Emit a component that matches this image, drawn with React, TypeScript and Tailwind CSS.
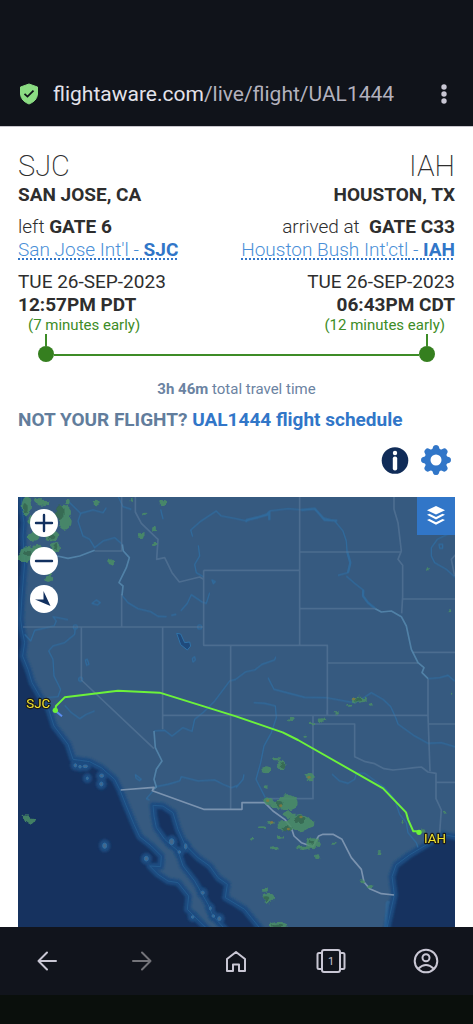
import type { ReactNode } from "react";

const TEETH = [0, 45, 90, 135, 180, 225, 270, 315];

const PACIFIC =
  "M-40 -40L8 -20L12 40L18 80L15 120L20 200L12 300L8 370L12 400L20 440L14 480L30 520L42 560L65 600L92 640L108 690L150 745L165 790L215 797L250 815L290 850L305 880L325 930L348 985L365 1022L400 1050L430 1080L428 1112L395 1110L420 1135L450 1155L480 1160L512 1200L508 1240L530 1262L590 1320L-40 1320Z";
const CORTEZ =
  "M405 928L435 930L465 950L480 1000L500 1045L540 1085L575 1110L600 1145L628 1165L622 1205L654 1224L680 1240L700 1265L745 1320L640 1320L585 1260L570 1225L550 1190L530 1155L495 1110L480 1065L440 1030L415 995L408 960Z";
const GULF =
  "M1350 1030L1311 1022L1274 1016L1224 1047L1174 1077L1134 1107L1122 1142L1129 1197L1119 1242L1102 1320L1350 1320Z";

const ISLANDS: [number, number, number, number][] = [
  [172, 808, 5, 6], [186, 812, 5, 5], [202, 811, 8, 5], [208, 847, 4, 5], [251, 839, 7, 6],
  [250, 864, 6, 7], [260, 1049, 7, 9], [385, 1088, 7, 8], [461, 1037, 8, 10], [503, 1051, 5, 9],
  [484, 1068, 5, 5], [554, 1190, 6, 6], [577, 1237, 4, 6], [586, 1260, 5, 5], [604, 1268, 6, 7], [524, 1263, 5, 5],
];

const BORDERS = [
  "M311 0V165M311 295V393M230 165H313M15 393H557M557 223V448H638V940M557 223H845M190 393V552L408 758M434 393V700M434 658H1230M845 0V448M638 448H928V658M845 168H1150M845 338H1072M928 501H1200M1153 309H1320M1184 469H1320M1230 548V658L1236 826M1230 684H1320",
  "M352 0V48L370 82L420 130L416 190L440 185L462 230L484 258L545 243L557 250",
  "M1128 0V40L1140 80L1150 165L1140 190L1154 208V300L1151 352",
  "M885 658V908H745M885 684H1010V782L1042 797L1070 803L1098 818L1125 822L1155 819L1190 815L1210 813L1230 828L1254 832V908L1270 942L1265 1010M1254 859H1320M928 642V658M1320 168L1300 190L1310 240",
];

const RIVERS = [
  "M150 15L188 52L180 75L195 120L215 130L230 155L255 135L290 125L313 145",
  "M188 52L225 42L255 50L265 35M300 0L315 32L340 40M428 40L435 68L430 50",
  "M524 122L518 102L545 78L595 45L610 60L654 68",
  "M541 148L545 180L530 205L535 230L557 243M575 290L565 322L552 318L520 296L508 322L488 345M475 355L460 358M446 362L420 361L398 347L360 338L330 320L312 298",
  "M20 415L38 435L50 403L108 390L115 375L105 362L150 371M172 393L170 415L140 440L105 450L92 465L105 490L108 540L128 580L120 602L88 605",
  "M654 68L685 75L745 55L755 45L810 38L855 42L890 38L915 65L950 75L975 105L985 135L987 165L997 200L990 230L960 238M985 240L1010 262L1036 282L1035 300L1050 320L1072 338",
  "M654 549L682 528L710 522L732 505L770 492L773 482M750 545L768 580L860 604L925 605L1008 620L1030 610L1060 590L1095 610L1118 632L1133 665L1140 684L1190 720L1230 742L1270 740L1320 755",
  "M707 620L740 622L772 630L775 665L760 710L738 750L728 800L714 850L742 905M654 875L675 850L678 835M942 834L965 855L990 862L1010 850L1015 832L1040 832L1100 875L1130 910L1145 955L1165 980L1170 1010L1195 1040L1200 1055",
  "M1320 100L1258 130L1240 155L1240 180L1250 200L1285 220L1311 243M1230 548L1265 545L1290 538L1310 555",
  "M140 628L160 650L185 668L205 655L230 645M654 550L635 555L590 615L555 650L530 670L522 706L495 695L462 720L440 703L408 705M410 873L450 865L485 855L490 842L540 855L590 852L615 865L640 875L660 868M405 885L385 908L395 912",
];

const LIT_RIVERS = [
  "M118 180L150 187L185 180L230 163M313 145L316 165L334 185L325 215L303 260L315 270L312 298",
  "M408 705L412 755L432 795L415 820L408 850L415 873L403 882",
  "M1072 338L1090 348L1120 345L1150 362L1165 390L1180 460L1200 500L1218 515L1212 530L1230 548",
];

const RADAR: [number, number, number, number][] = [
  [25, 30, 14, 28], [60, 12, 12, 7], [78, 22, 18, 8], [137, 48, 22, 22], [140, 80, 18, 22], [50, 75, 22, 14],
  [100, 118, 24, 18], [112, 155, 14, 17], [45, 122, 16, 12], [30, 170, 24, 20], [18, 188, 22, 10], [60, 158, 16, 12],
  [92, 250, 10, 8], [95, 235, 7, 5], [233, 20, 9, 9], [150, 18, 8, 7], [340, 14, 5, 6], [436, 20, 9, 8],
  [382, 55, 7, 5], [408, 99, 6, 7], [370, 118, 10, 8], [409, 145, 6, 5], [277, 198, 9, 8],
  [745, 820, 12, 12], [776, 788, 15, 5], [790, 808, 13, 15], [876, 842, 14, 11], [743, 870, 6, 5],
  [752, 914, 16, 10], [810, 920, 32, 23], [775, 928, 22, 11], [812, 956, 18, 10], [845, 980, 34, 26], [862, 982, 28, 14],
  [803, 990, 25, 15], [885, 1042, 20, 15], [855, 1055, 22, 6], [730, 992, 10, 4], [758, 979, 12, 5],
  [786, 1024, 10, 5], [772, 1055, 10, 5], [704, 1030, 8, 4], [898, 1082, 7, 4], [741, 1181, 9, 6],
  [751, 1205, 18, 14], [781, 1290, 28, 12], [1084, 1070, 6, 5], [1056, 1172, 10, 5], [1032, 1155, 6, 5],
  [820, 670, 7, 5], [912, 672, 13, 5], [882, 684, 10, 4], [1022, 611, 22, 9], [1058, 624, 6, 5],
  [994, 629, 9, 3], [956, 652, 7, 4], [860, 722, 7, 3], [1229, 220, 4, 4], [1296, 344, 4, 4], [947, 1040, 6, 3],
  [1280, 950, 9, 3], [1215, 1005, 8, 5], [1155, 979, 4, 5], [1302, 590, 4, 3],
];

const CORES: [number, number, number, number][] = [
  [22, 35, 7, 14], [125, 50, 12, 22], [100, 122, 12, 8], [28, 172, 12, 8], [112, 152, 6, 8], [880, 1040, 8, 6],
  [745, 1208, 9, 7], [784, 925, 10, 10], [806, 998, 12, 8], [846, 970, 16, 14], [795, 810, 7, 9], [1022, 611, 10, 6], [780, 1292, 18, 6],
];
const HOT: [number, number][] = [[749, 914], [788, 929], [811, 999], [873, 844], [849, 963], [1007, 609], [761, 979]];

function FlightMap() {
  return (
    <svg viewBox="0 3 1311 1290" className="block h-auto w-full bg-[#365a80]" role="img" aria-label="Flight track from SJC to IAH">
      <defs>
        <filter id="soft" x="-5%" y="-5%" width="110%" height="110%">
          <feGaussianBlur stdDeviation="3" />
        </filter>
        <filter id="rough" x="-5%" y="-5%" width="110%" height="110%">
          <feTurbulence type="fractalNoise" baseFrequency="0.06" numOctaves="2" seed="4" />
          <feDisplacementMap in="SourceGraphic" scale="16" xChannelSelector="R" yChannelSelector="G" />
          <feGaussianBlur stdDeviation="1.500" />
        </filter>
      </defs>
      <g fill="#12305f" stroke="#1e4c80" strokeWidth="20" strokeLinejoin="round" filter="url(#soft)">
        <path d={PACIFIC} />
        <path d={CORTEZ} />
        <path d={GULF} />
      </g>
      <g filter="url(#soft)" fill="#1e4c80">
        {ISLANDS.map(([x, y, rx, ry]) => (
          <ellipse key={`${x}-${y}`} cx={x} cy={y} rx={rx + 10} ry={ry + 10} />
        ))}
      </g>
      <g fill="none" stroke="#2b6699" strokeWidth="3" strokeLinejoin="round" opacity="0.6">
        <path d={PACIFIC} />
        <path d={CORTEZ} />
        <path d={GULF} />
      </g>
      <g fill="#45678a" stroke="#2f6ea3" strokeWidth="3">
        {ISLANDS.map(([x, y, rx, ry]) => (
          <ellipse key={`${x}-${y}`} cx={x} cy={y} rx={rx - 1} ry={ry - 1} />
        ))}
      </g>
      <g fill="none" stroke="#2f72a8" strokeWidth="4" strokeLinejoin="round" opacity="0.7">
        {RIVERS.map((d) => <path key={d} d={d} />)}
        <path d="M222 322L235 312L247 320L238 327ZM582 252L592 257L586 263ZM202 492L208 490L213 505L206 508ZM523 488L530 482L532 492L525 498ZM352 836L370 850L364 854L354 846ZM1263 145H1274V157H1265Z" />
        <circle cx="172" cy="393" r="6" />
        <circle cx="188" cy="550" r="6" />
        <circle cx="545" cy="393" r="6" />
        <path strokeWidth="7" d="M684 78L686 72L720 64L748 56L754 48L754 72M850 42L890 38L908 58L920 72L958 74M987 165L997 200L990 230M1036 282L1035 300L1050 320L1072 338" />
        <path strokeWidth="10" opacity="0.6" d="M1108 1218L1102 1300M1112 1215L1106 1230" />
      </g>
      <path d="M476 412L488 414L500 440L515 438L518 450L508 462L488 446Z" fill="#1f4a7c" stroke="#2f72a8" strokeWidth="3" />
      <g fill="none" stroke="#5c7b9b" strokeWidth="5" strokeLinejoin="round" opacity="0.6">
        {BORDERS.map((d) => <path key={d} d={d} />)}
      </g>
      <g fill="none" stroke="#5689ae" strokeWidth="5" strokeLinejoin="round" opacity="0.85">
        {LIT_RIVERS.map((d) => <path key={d} d={d} />)}
      </g>
      <path
        d="M308 882L408 874L403 884L557 940H672V920H740L765 945L800 970L820 995L828 1020L850 1040L885 1052L902 1020L915 1015H945L972 1030L1000 1085L1030 1120L1038 1158L1055 1178L1090 1193L1128 1197"
        fill="none" stroke="#7b93af" strokeWidth="5" strokeLinejoin="round"
      />
      <g fill="#4b8f66" opacity="0.85" filter="url(#rough)">
        {RADAR.map(([x, y, rx, ry]) => <ellipse key={`${x}-${y}`} cx={x} cy={y} rx={rx} ry={ry} />)}
        <path d="M14 960L28 958L40 968L52 969L45 982L34 984L16 971Z" />
      </g>
      <g fill="#356550" opacity="0.8" filter="url(#rough)">
        {CORES.map(([x, y, rx, ry]) => <ellipse key={`${x}-${y}`} cx={x} cy={y} rx={rx} ry={ry} />)}
      </g>
      <g fill="#8a7a3c" opacity="0.8">
        {HOT.map(([x, y]) => <ellipse key={x} cx={x} cy={y} rx="5" ry="4" />)}
      </g>
      <path d="M112 644L132 661" stroke="#5a8df0" strokeWidth="6" />
      <path
        d="M112 642L114 630L140 604L300 584L425 590L654 661L794 709L840 732L1095 877L1164 949L1170 970L1186 1006H1203"
        fill="none" stroke="#6cf23a" strokeWidth="6" strokeLinejoin="round"
      />
      <circle cx="112" cy="643" r="8" fill="#6cf23a" />
      <circle cx="1203" cy="1009" r="8" fill="#6cf23a" />
      <g fill="#f2e430" stroke="#1a1a1a" strokeWidth="7" strokeLinejoin="round" paintOrder="stroke" fontSize="40" className="font-[Roboto,sans-serif]">
        <text x="25" y="637">SJC</text>
        <text x="1218" y="1042">IAH</text>
      </g>
    </svg>
  );
}

function MapButton({ label, children }: { label: string; children: ReactNode }) {
  return (
    <button aria-label={label} className="flex size-7 items-center justify-center rounded-full bg-white">
      <svg viewBox="0 0 28 28" className="size-7" fill="none" stroke="#12305f" strokeWidth="2.4" strokeLinecap="round">
        {children}
      </svg>
    </button>
  );
}

function NavButton({ label, dim, children }: { label: string; dim?: boolean; children: ReactNode }) {
  return (
    <button aria-label={label} className={`flex items-center justify-center ${dim ? "text-[#74747a]" : "text-[#c9c7d4]"}`}>
      <svg viewBox="0 0 32 28" className="h-7 w-8" fill="none" stroke="currentColor" strokeWidth="2" strokeLinecap="round" strokeLinejoin="round">
        {children}
      </svg>
    </button>
  );
}

type Stop = { code: string; city: string; status: string; gate: string; airport: string; time: string; note: string };

function StopDetails({ stop, end }: { stop: Stop; end?: boolean }) {
  return (
    <section className={`flex flex-col text-[19px] leading-[23px] whitespace-nowrap ${end ? "items-end text-right" : "items-start"}`}>
      <h2 className="text-[29px] leading-[34px] font-extralight">{stop.code}</h2>
      <p className="font-bold">{stop.city}</p>
      <p className="mt-[9px] font-light whitespace-pre">
        {stop.status} <b className="font-bold">{stop.gate}</b>
      </p>
      <a href="#airport" className="font-light text-[#4a8fd8] underline decoration-[#3176c8] decoration-dotted decoration-2 underline-offset-2">
        {stop.airport} - <b className="font-bold text-[#3176c8]">{stop.code}</b>
      </a>
      <p className="mt-[9px]">TUE 26-SEP-2023</p>
      <p className="font-bold">{stop.time}</p>
      <p className="px-[10px] text-[15px] leading-[18px] text-[#3d8c26]">{stop.note}</p>
    </section>
  );
}

function Endpoint() {
  return (
    <div className="flex flex-col items-center">
      <div className="h-3 w-[2px] bg-[#3d8c26]" />
      <div className="size-4 rounded-full bg-[#357f1f]" />
    </div>
  );
}

export default function App() {
  return (
    <div className="flex min-h-screen flex-col bg-white font-[Roboto,sans-serif] text-[#2e2e2e]">
      <header className="flex items-center border-b border-[#c8c6cc] bg-[#10131a] pt-[62px] pr-[17px] pl-[19px]">
        <svg viewBox="0 0 20 22" className="h-[22px] w-5" aria-hidden="true">
          <path d="M10 1L18.5 4V11Q18 18 10 21Q2 18 1.500 11V4Z" fill="#8bdc83" stroke="#8bdc83" strokeLinejoin="round" />
          <path d="M5.500 10.800L8.500 13.600L14.500 7.600" fill="none" stroke="#10131a" strokeWidth="1.800" />
        </svg>
        <p className="ml-[14px] flex-1 text-[21px] leading-[64px] text-[#b3b1bd]">
          <span className="text-[#e3e2ea]">flightaware.com</span>/live/flight/UAL1444
        </p>
        <button aria-label="Menu" className="flex w-6 justify-center">
          <svg viewBox="0 0 6 20" className="h-5 w-[6px]" fill="#c9c7d4">
            <circle cx="3" cy="3" r="2.700" />
            <circle cx="3" cy="10" r="2.700" />
            <circle cx="3" cy="17" r="2.700" />
          </svg>
        </button>
      </header>

      <main className="px-[18px] pt-[22px]">
        <div className="flex justify-between">
          <StopDetails
            stop={{ code: "SJC", city: "SAN JOSE, CA", status: "left", gate: "GATE 6", airport: "San Jose Int'l", time: "12:57PM PDT", note: "(7 minutes early)" }}
          />
          <StopDetails
            end
            stop={{ code: "IAH", city: "HOUSTON, TX", status: "arrived at ", gate: "GATE C33", airport: "Houston Bush Int'ctl", time: "06:43PM CDT", note: "(12 minutes early)" }}
          />
        </div>
        <div className="flex items-end px-5">
          <Endpoint />
          <div className="mb-[6px] h-[2px] flex-1 bg-[#3d8c26]" />
          <Endpoint />
        </div>
        <p className="mt-[18px] text-center text-[15px] leading-[18px] text-[#6b83a2]">
          <b>3h 46m</b> total travel time
        </p>
        <p className="mt-[10px] text-[19px] leading-[23px] font-bold whitespace-nowrap text-[#627d9c]">
          NOT YOUR FLIGHT? <a href="#schedule" className="text-[#3176c8]">UAL1444 flight schedule</a>
        </p>
        <div className="mt-[14px] mb-[22px] flex items-center justify-end gap-3 pr-1">
          <button aria-label="Information">
            <svg viewBox="0 0 28 28" className="size-7">
              <circle cx="14" cy="14.500" r="13.300" fill="#102c58" />
              <circle cx="14" cy="7" r="2.200" fill="#fff" />
              <rect x="11.800" y="10.500" width="4.400" height="14" rx="2" fill="#fff" />
            </svg>
          </button>
          <button aria-label="Settings">
            <svg viewBox="-15 -15 30 30" className="size-[30px]">
              {TEETH.map((a) => (
                <path key={a} d="M-4.300 -9L-2.800 -13.500Q-2.300 -15 0 -15Q2.300 -15 2.800 -13.500L4.300 -9Z" fill="#3176c8" transform={`rotate(${a})`} />
              ))}
              <circle r="8.500" fill="none" stroke="#3176c8" strokeWidth="6" />
            </svg>
          </button>
        </div>

        <div className="relative overflow-hidden">
          <FlightMap />
          <div className="absolute top-3 left-3 flex flex-col gap-[10px]">
            <MapButton label="Zoom in"><path d="M14 6V22M6 14H22" /></MapButton>
            <MapButton label="Zoom out"><path d="M6 14H22" /></MapButton>
            <MapButton label="Centre map"><path d="M13.500 6V14.500H5L20.500 21Z" fill="#12305f" stroke="none" /></MapButton>
          </div>
          <button aria-label="Map layers" className="absolute top-0 right-0 flex size-[38px] items-center justify-center bg-[#3176c8]">
            <svg viewBox="0 0 18 20" className="h-5 w-[18px]" fill="#fff">
              <path d="M9 0L18 4.300L9 8.600L0 4.300Z" />
              <path d="M0 8.800L2.500 7.800L9 11L15.500 7.800L18 8.800L9 13.400Z" />
              <path d="M0 14L2.500 13L9 16.200L15.500 13L18 14L9 18.800Z" />
            </svg>
          </button>
        </div>
      </main>

      <nav className="grid h-[68px] grid-cols-5 bg-[#11141c]">
        <NavButton label="Back"><path d="M25 14H7.500M16 5.500L7.500 14L16 22.500" /></NavButton>
        <NavButton label="Forward" dim><path d="M7 14H24.500M16 5.500L24.500 14L16 22.500" /></NavButton>
        <NavButton label="Home"><path d="M7 12L16 5L25 12V24H19V17.500H13V24H7Z" /></NavButton>
        <NavButton label="Tabs">
          <rect x="7" y="3" width="18" height="22" rx="2" />
          <path d="M7 6H4Q2.500 6 2.500 7.500V20.500Q2.500 22 4 22H7M25 6H28Q29.500 6 29.500 7.500V20.500Q29.500 22 28 22H25" />
          <text x="16" y="18" textAnchor="middle" fontSize="11" fill="currentColor" stroke="none">1</text>
        </NavButton>
        <NavButton label="Account">
          <circle cx="16" cy="14" r="11.300" />
          <circle cx="16" cy="10.800" r="3.500" />
          <path d="M8.500 21.500Q12 18 16 18T23.500 21.500" />
        </NavButton>
      </nav>
      <div className="min-h-[28px] flex-1 bg-[#0a0f0c]" />
    </div>
  );
}
